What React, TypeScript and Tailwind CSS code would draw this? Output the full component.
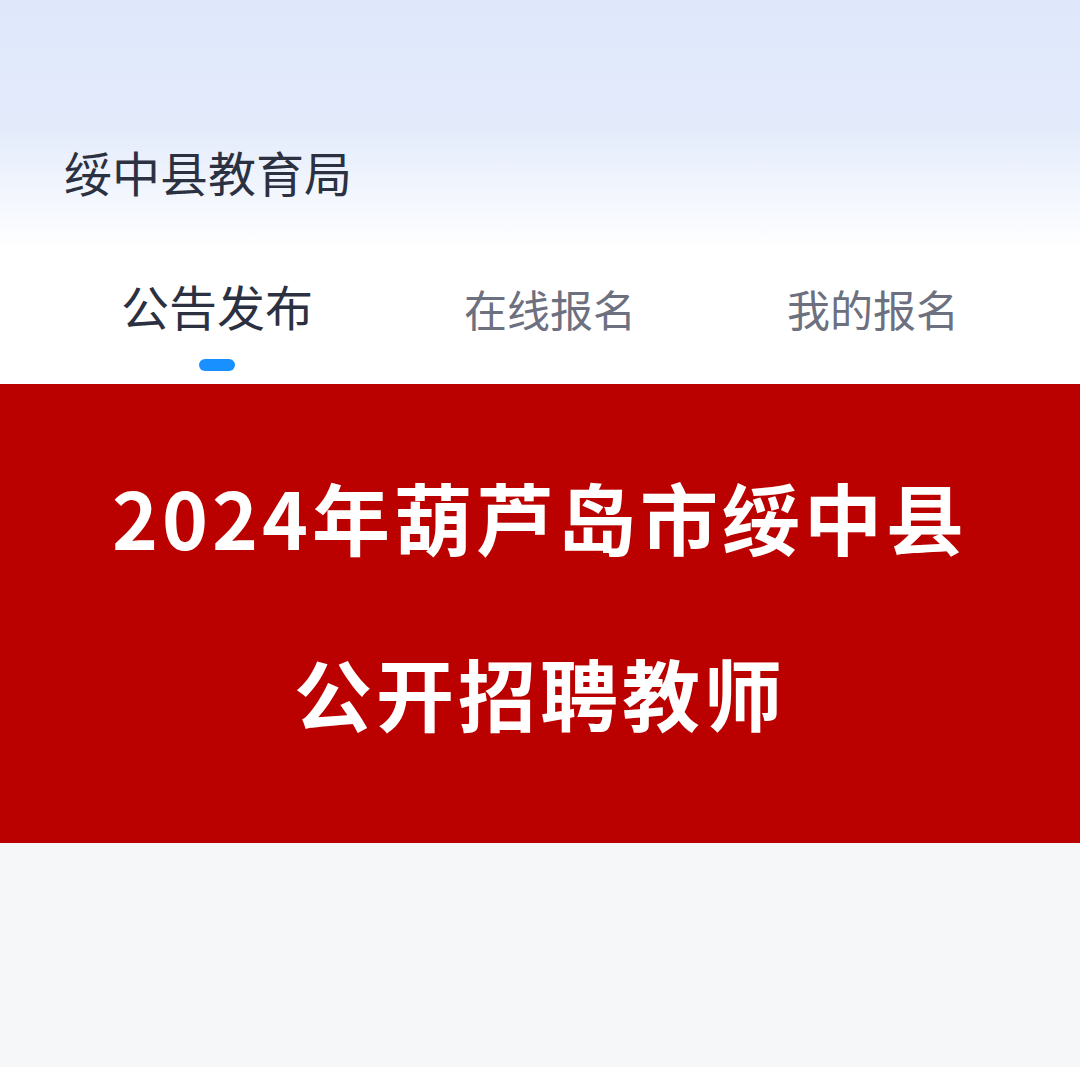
import React from 'react';

const tabs = ['公告发布', '在线报名', '我的报名'];

const App: React.FC = () => {
  return (
    <div
      className="w-[1080px] h-[1067px] flex flex-col bg-[#f6f7f9] overflow-hidden"
      style={{ fontFamily: '"Noto Sans CJK SC", "Noto Sans", sans-serif' }}
    >
      {/* Header */}
      <div className="bg-gradient-to-b from-[#dfe8fb] via-[#e3ebfb] to-white h-[250px] flex flex-col justify-end">
        <h1 className="pl-[64px] pb-[51px] text-[48px] leading-[56px] text-[#2c3142] font-normal">绥中县教育局</h1>
      </div>

      {/* Tabs */}
      <div className="bg-white h-[134px] flex items-start pl-[121px] gap-[151px]">
        {tabs.map((t, i) =>
          i === 0 ? (
            <div key={t} className="flex flex-col items-center">
              <span className="mt-[25px] text-[48px] leading-[60px] text-[#2c3142]">{t}</span>
              <div className="mt-[24px] w-[36px] h-[12px] rounded-full bg-[#1890ff]"></div>
            </div>
          ) : (
            <span key={t} className="mt-[28px] text-[43px] leading-[60px] text-[#6d707f]">
              {t}
            </span>
          )
        )}
      </div>

      {/* Banner */}
      <div className="bg-[#bb0000] h-[459px] flex flex-col items-center text-white font-bold">
        <div className="mt-[82px] text-[78px] leading-[100px] tracking-[4px]">2024年葫芦岛市绥中县</div>
        <div className="mt-[76px] text-[78px] leading-[100px] tracking-[4px]">公开招聘教师</div>
      </div>

      <div className="flex-1 bg-[#f6f7f9]"></div>
    </div>
  );
};

export default App;
